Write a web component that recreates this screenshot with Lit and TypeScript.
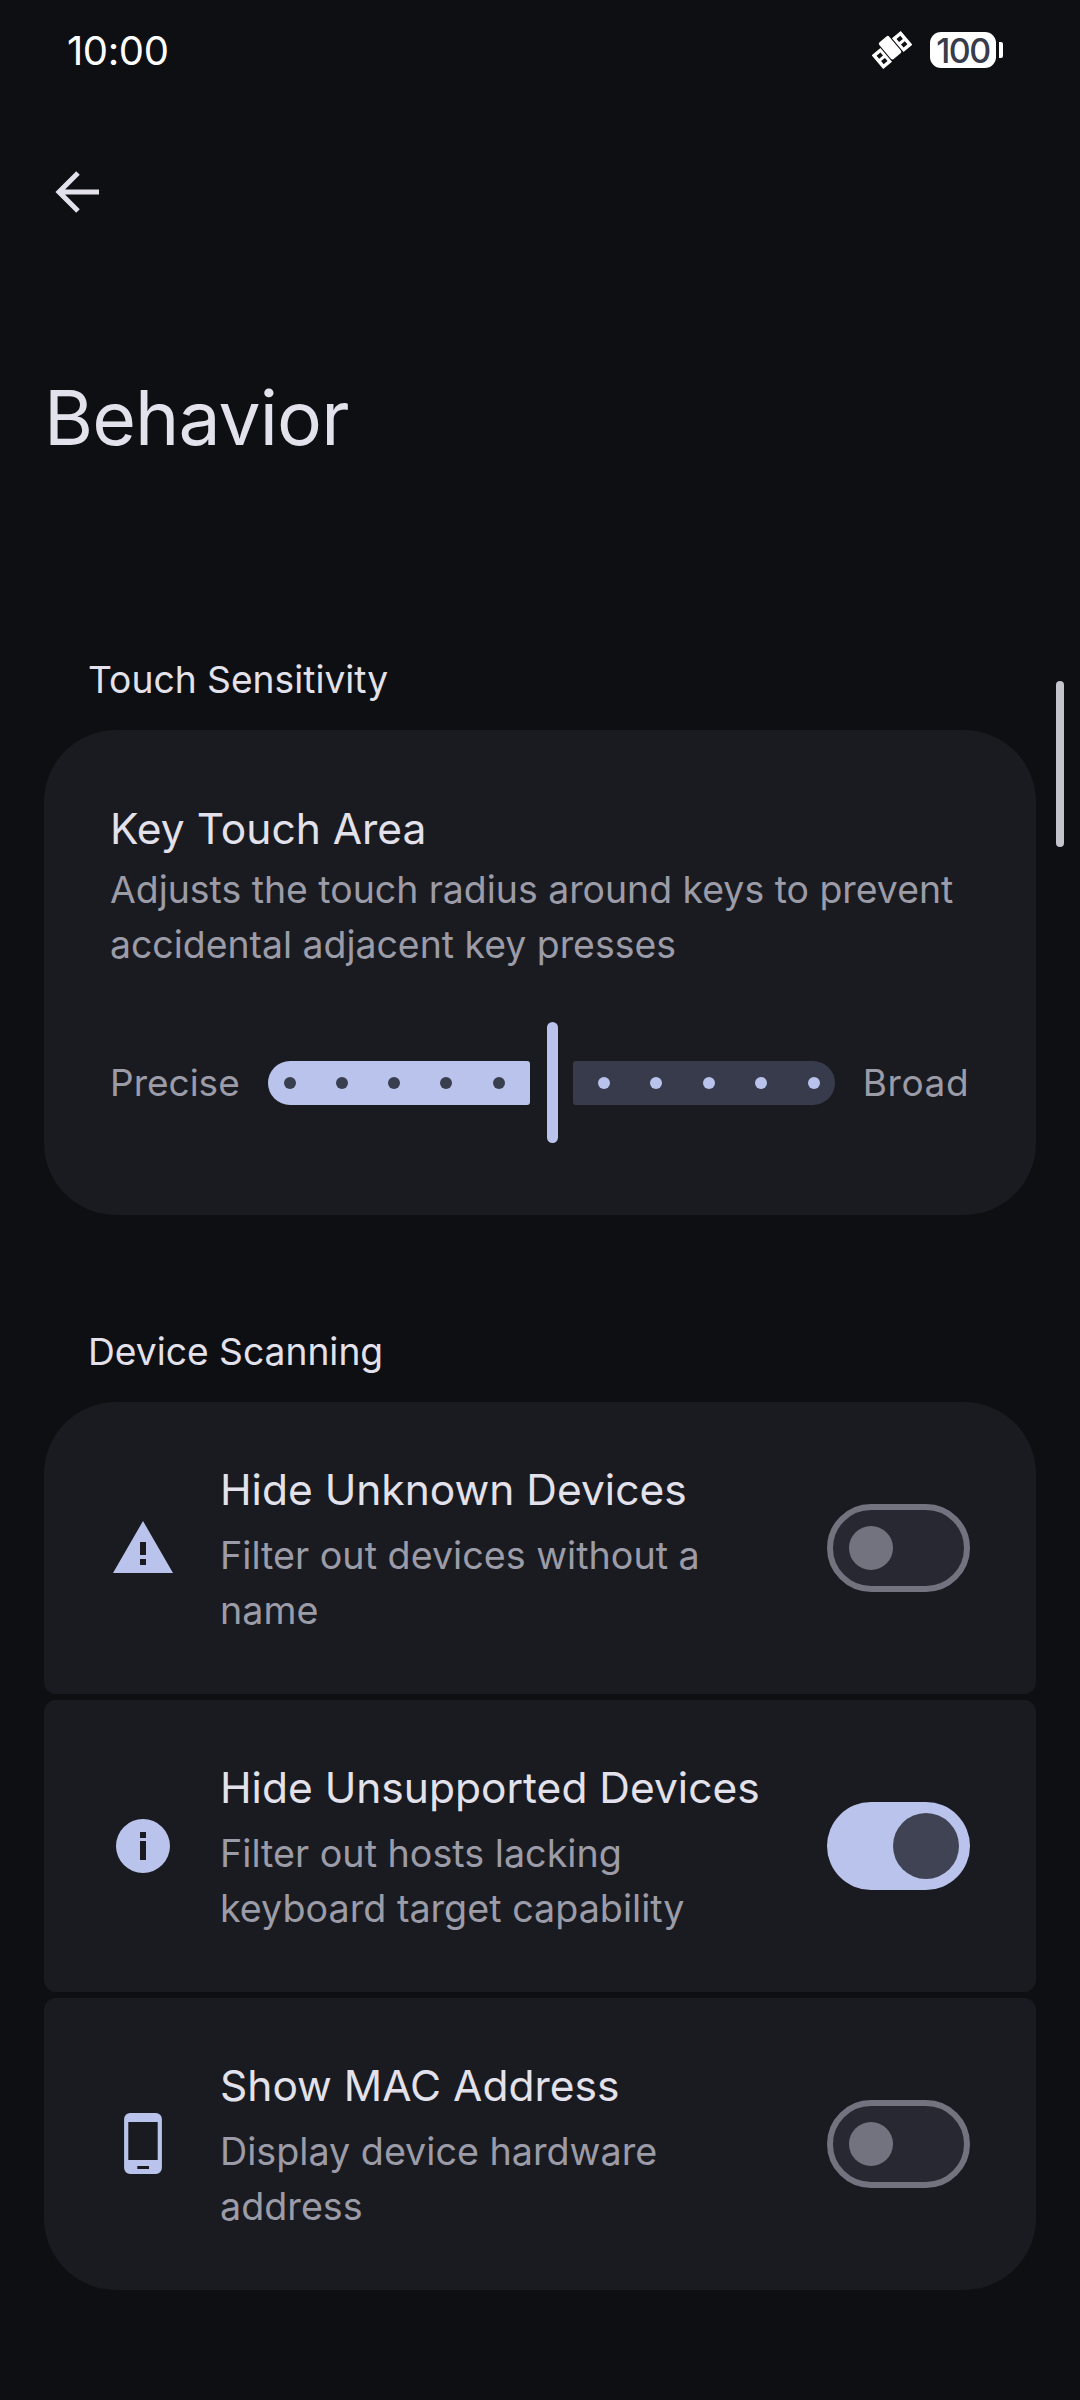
import { LitElement, html, css, svg } from "lit";
import { customElement } from "lit/decorators.js";

@customElement("app-root")
export class AppRoot extends LitElement {
  static styles = css`
    :host { display: block; width: 1080px; height: 2400px; background: #0e0f13; font-family: "Inter", "Noto Sans", sans-serif; color: #e3e2ec; overflow: hidden; position: relative; }
    .status { height: 100px; display: flex; align-items: center; padding: 0 77px 0 67px; box-sizing: border-box; justify-content: space-between; }
    .time { font-size: 40px; color: #fff; font-weight: 400; letter-spacing: -0.4px; }
    .sicons { display: flex; align-items: center; gap: 18px; }
    .batt { display: flex; align-items: center; gap: 3px; }
    .battbody { width: 66px; height: 36px; background: #fff; border-radius: 11px; color: #373b4a; font-size: 34px; font-weight: 500; display: flex; align-items: center; justify-content: center; letter-spacing: -1.5px; }
    .battcap { width: 4px; height: 16px; background: #fff; border-radius: 0 2px 2px 0; }
    .nav { height: 92px; padding-left: 55px; display: flex; align-items: center; margin-top: 46px; }
    .title { font-size: 75px; line-height: 80px; margin: 140px 0 0 44px; color: #e3e2ec; font-weight: 400; letter-spacing: -0.9px; }
    .section { font-size: 37.2px; line-height: 44px; margin: 0 0 0 88px; color: #e3e2ec; }
    .s1 { margin-top: 200px; }
    .s2 { margin-top: 115px; }
    .card { margin: 28px 44px 0; background: #1a1b20; }
    .touch { border-radius: 72px; height: 485px; box-sizing: border-box; padding: 73px 66px 0; }
    .h { font-size: 42.5px; line-height: 52px; color: #e3e2ec; }
    .d { font-size: 37.4px; line-height: 55px; color: #9c9ca8; margin-top: 7px; }
    .slider { display: flex; align-items: center; height: 121px; margin-top: 50px; }
    .lab { font-size: 37px; color: #9c9ca8; }
    .broad { letter-spacing: 0.6px; }
    .seg { width: 262px; height: 44px; display: flex; align-items: center; justify-content: space-between; box-sizing: border-box; flex: none; }
    .seg i { display: block; width: 12px; height: 12px; border-radius: 50%; }
    .on { background: #b9c3ec; border-radius: 22px 3px 3px 22px; margin-left: 28px; padding: 0 25px 0 16px; }
    .on i { background: #3a3f4f; }
    .off { background: #373b4b; border-radius: 3px 22px 22px 3px; margin-right: 28px; padding: 0 15px 0 25px; }
    .off i { background: #b9c3ec; }
    .handle { width: 11px; height: 121px; background: #b9c3ec; border-radius: 5.5px; margin: 0 15px 0 17px; flex: none; }
    .rows { margin: 28px 44px 0; display: flex; flex-direction: column; gap: 6px; }
    .row { height: 292px; background: #1a1b20; border-radius: 12px; display: flex; align-items: center; box-sizing: border-box; }
    .row:first-child { border-radius: 72px 72px 12px 12px; }
    .row:last-child { border-radius: 12px 12px 72px 72px; }
    .ic { width: 72px; height: 72px; margin-left: 63px; flex: none; fill: #b9c3ec; }
    .txt { margin-left: 41px; flex: 1; margin-top: 5px; }
    .rt { font-size: 42.5px; line-height: 52px; }
    .rd { font-size: 37.7px; line-height: 55px; color: #9c9ca8; margin-top: 12px; }
    .sw { width: 143px; height: 88px; border-radius: 44px; box-sizing: border-box; flex: none; margin-right: 66px; display: flex; align-items: center; }
    .sw.o { background: #272831; border: 6px solid #73737f; padding-left: 16px; }
    .sw.o b { display: block; width: 44px; height: 44px; border-radius: 50%; background: #73737f; }
    .sw.n { background: #b9c3ec; justify-content: flex-end; padding-right: 11px; }
    .sw.n b { display: block; width: 66px; height: 66px; border-radius: 50%; background: #3f4354; }
    .scroll { position: absolute; left: 1056px; top: 681px; width: 8px; height: 166px; border-radius: 4px; background: #c3c4cc; }
  `;

  row(title: string, d1: string, d2: string, icon: unknown, on: boolean) {
    return html`<div class="row">
      <svg class="ic" viewBox="0 0 24 24">${icon}</svg>
      <div class="txt"><div class="rt">${title}</div><div class="rd">${d1}<br />${d2}</div></div>
      <div class="sw ${on ? "n" : "o"}"><b></b></div>
    </div>`;
  }

  render() {
    const dots = [0, 1, 2, 3, 4].map(() => html`<i></i>`);
    return html`
      <div class="status">
        <span class="time">10:00</span>
        <div class="sicons">
          <svg width="40" height="40" viewBox="0 0 40 40" fill="#fff">
            <g transform="rotate(-40 20 20)">
              <rect x="13.500" y="6" width="13" height="22" rx="2"/>
              <path fill-rule="evenodd" d="M1 11h11.500v18H1z M4.500 14.500v4h5v-4z M4.500 21.500v4h5v-4z"/>
              <path fill-rule="evenodd" d="M27.500 11H39v18H27.500z M30.500 14.500v4h5v-4z M30.500 21.500v4h5v-4z"/>
            </g>
          </svg>
          <div class="batt"><div class="battbody">100</div><div class="battcap"></div></div>
        </div>
      </div>
      <div class="nav">
        <svg width="44" height="44" viewBox="0 0 44 44" fill="none" stroke="#e3e2ec" stroke-width="5"><path d="M44 22H4 M23 3 L4 22 L23 41"/></svg>
      </div>
      <div class="title">Behavior</div>
      <div class="section s1">Touch Sensitivity</div>
      <div class="card touch">
        <div class="h">Key Touch Area</div>
        <div class="d">Adjusts the touch radius around keys to prevent<br />accidental adjacent key presses</div>
        <div class="slider">
          <span class="lab">Precise</span>
          <div class="seg on">${dots}</div>
          <div class="handle"></div>
          <div class="seg off">${dots}</div>
          <span class="lab broad">Broad</span>
        </div>
      </div>
      <div class="section s2">Device Scanning</div>
      <div class="rows">
        ${this.row("Hide Unknown Devices", "Filter out devices without a", "name", svg`<path fill-rule="evenodd" d="M12 3 L22 20.300 H2 Z M11 10 V14.300 H13 V10 Z M11 15.700 V17.700 H13 V15.700 Z"/>`, false)}
        ${this.row("Hide Unsupported Devices", "Filter out hosts lacking", "keyboard target capability", svg`<path fill-rule="evenodd" d="M12 3a9 9 0 1 0 0 18 9 9 0 0 0 0-18z M11 7.300h2v2h-2z M11 10.300h2v6.400h-2z"/>`, true)}
        ${this.row("Show MAC Address", "Display device hardware", "address", svg`<path fill-rule="evenodd" d="M7.700 1.700h8.600a2 2 0 0 1 2 2V20a2 2 0 0 1-2 2H7.700a2 2 0 0 1-2-2V3.700a2 2 0 0 1 2-2z M7.100 4.700V17.300h9.800V4.700z M10.100 19.300v1h3.900v-1z"/>`, false)}
      </div>
      <div class="scroll"></div>
    `;
  }
}
